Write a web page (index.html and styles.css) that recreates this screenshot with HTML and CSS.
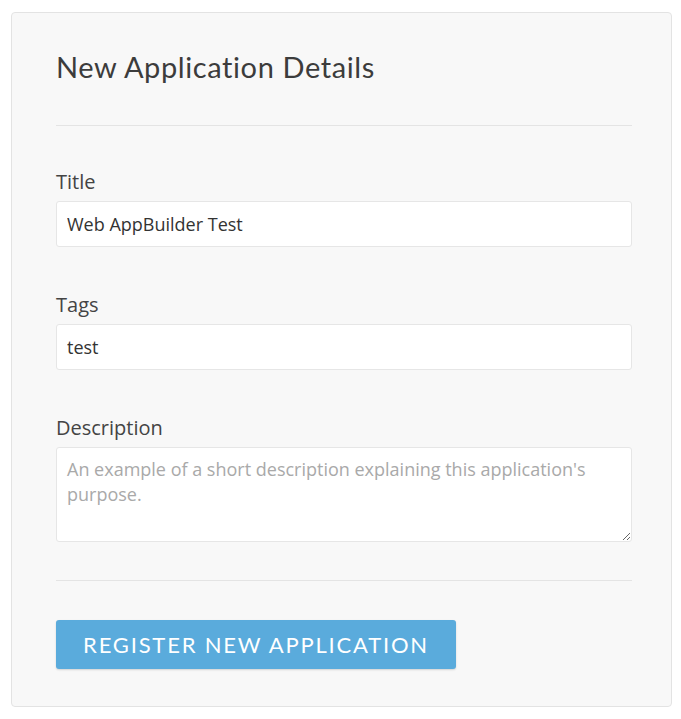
FILE: index.html
```html
<!DOCTYPE html>
<html lang="en">
<head>
  <meta charset="UTF-8" />
  <meta name="viewport" content="width=device-width, initial-scale=1.0"/>
  <title>New Application Details</title>
  <link rel="stylesheet" href="styles.css">
</head>
<body>

  <div class="app-card">
    <h2>New Application Details</h2>
    <hr class="divider">

    <div class="field">
      <label for="appTitle">Title</label>
      <input type="text" id="appTitle" value="Web AppBuilder Test">
    </div>

    <div class="field">
      <label for="appTags">Tags</label>
      <input type="text" id="appTags" value="test">
    </div>

    <div class="field">
      <label for="appDesc">Description</label>
      <textarea id="appDesc" placeholder="An example of a short description explaining this application's purpose."></textarea>
    </div>

    <hr class="divider bottom">

    <button class="register-btn">Register New Application</button>
  </div>

</body>
</html>
```

FILE: styles.css
```css
body {
  font-family: 'Open Sans', sans-serif;
  background-color: white;
  margin: 0;
  padding: 0;
  color: #444;
}

.app-card {
  width: 576px;
  margin: 12px 0 0 11px;
  padding: 38px 39px 37px 44px;
  background-color: #f8f8f8;
  border: 1px solid #e3e3e3;
  border-radius: 4px;
}

.app-card h2 {
  font-family: 'Lato', sans-serif;
  font-size: 29px;
  line-height: 32px;
  font-weight: 400;
  letter-spacing: 0.6px;
  color: #3c3c3c;
  margin: 0;
}

.divider {
  border: none;
  border-top: 1px solid #e4e4e4;
  margin: 42px 0 43px;
}

.divider.bottom {
  margin: 38px 0 39px;
}

.field {
  margin-bottom: 45px;
}

.field:last-of-type {
  margin-bottom: 0;
}

.field label {
  display: block;
  font-size: 20px;
  line-height: 26px;
  color: #444;
  margin-bottom: 6px;
}

.field input, .field textarea {
  display: block;
  box-sizing: border-box;
  width: 100%;
  margin: 0;
  font-family: 'Open Sans', sans-serif;
  font-size: 18px;
  color: #333;
  background: white;
  border: 1px solid #e6e6e6;
  border-radius: 3px;
}

.field input {
  height: 46px;
  padding: 0 10px;
}

.field textarea {
  height: 95px;
  padding: 9px 10px;
  line-height: 25px;
  resize: vertical;
}

.field textarea::placeholder {
  color: #a9a9a9;
}

.register-btn {
  display: block;
  width: 400px;
  height: 49px;
  background-color: #5aabdc;
  color: white;
  border: none;
  border-radius: 3px;
  box-shadow: 0 1px 2px rgba(0,0,0,0.15);
  font-family: 'Lato', sans-serif;
  font-size: 22px;
  letter-spacing: 1.8px;
  text-transform: uppercase;
  cursor: pointer;
}
```
